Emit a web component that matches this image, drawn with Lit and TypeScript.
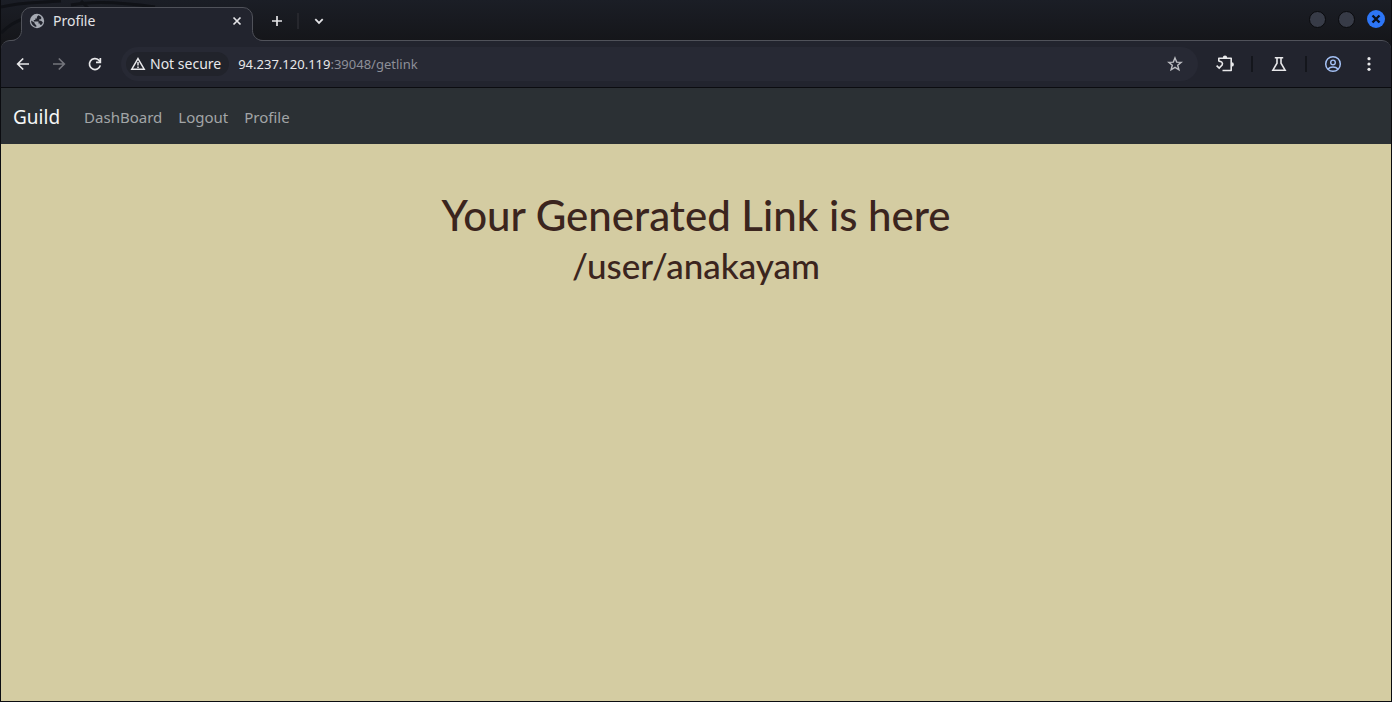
import { LitElement, html, css, svg } from "lit";
import { customElement, property } from "lit/decorators.js";

const icons = {
  back: svg`<path d="M14 8H3M8.200 2.500 2.700 8l5.500 5.500" fill="none" stroke="currentColor" stroke-width="1.700"/>`,
  forward: svg`<path d="M2 8h11M7.800 2.500 13.300 8l-5.500 5.500" fill="none" stroke="currentColor" stroke-width="1.700"/>`,
  reload: svg`<path d="M13.300 9.400A5.500 5.500 0 1 1 11.800 4.100L13.400 6" fill="none" stroke="currentColor" stroke-width="1.700"/><path d="M14.200 2v5.200H9V5.500h3.500V2z" fill="currentColor"/>`,
  close: svg`<path d="M4.500 4.500l7 7m0-7-7 7" stroke="currentColor" stroke-width="1.700"/>`,
  plus: svg`<path d="M8 3v10M3 8h10" stroke="currentColor" stroke-width="1.700"/>`,
  chevron: svg`<path d="M4.300 6.200 8 9.900l3.700-3.700" fill="none" stroke="currentColor" stroke-width="1.800"/>`,
  globe: svg`<circle cx="8" cy="8" r="7.200" fill="currentColor"/><path d="M9.300 2.300 7.900 4v1.500H6.300v1.600H4.800v1.400h4.700v2h1.400v1.300h1.600a6 6 0 0 0 1.300-2.600L12 7.700h-1.700V6.200h1.900V4A6 6 0 0 0 9.300 2.300zM2.100 7.500A6 6 0 0 0 7.300 13.900v-1.700L5.700 10.700V9.800z" fill="#22242e"/>`,
  warning: svg`<path d="M8 2.600 14.200 13.200H1.800z" fill="none" stroke="currentColor" stroke-width="1.500"/><path d="M8 6v3.600M8 10.500v1.500" stroke="currentColor" stroke-width="1.500"/>`,
  star: svg`<path d="M8 1.900 9.700 6.100 14.200 6.400 10.700 9.300 11.900 13.800 8 11.300 4.100 13.800 5.300 9.300 1.800 6.400 6.300 6.100z" fill="none" stroke="currentColor" stroke-width="1.400"/>`,
  puzzle: svg`<g transform="scale(.8889)"><path d="M2.800 6.500V3.300h12.400v12.200H6.500" fill="none" stroke="currentColor" stroke-width="1.600" stroke-linejoin="round"/><path d="M2.800 6.200c2.600 0 4.500 1.600 3.300 3.800L3.200 13.100.600 10.600" fill="none" stroke="currentColor" stroke-width="1.600"/><path d="M6.800 2.900a2.200 2.300 0 0 1 4.400 0zM15.700 7.200a2.200 2.200 0 0 1 0 4.400z" fill="currentColor"/></g>`,
  flask: svg`<path d="M3.800 1.700h8.400M6 2v5.200L1.900 14.200h12.200L10 7.200V2" fill="none" stroke="currentColor" stroke-width="1.600"/>`,
  person: svg`<circle cx="8" cy="8" r="7.300" fill="none" stroke="currentColor" stroke-width="1.500"/><circle cx="8" cy="6.400" r="2.300" fill="none" stroke="currentColor" stroke-width="1.400"/><path d="M3 13c2.500-2.700 7.500-2.700 10 0" fill="none" stroke="currentColor" stroke-width="1.500"/>`,
  dots: svg`<circle cx="8" cy="2.700" r="1.600" fill="currentColor"/><circle cx="8" cy="8" r="1.600" fill="currentColor"/><circle cx="8" cy="13.300" r="1.600" fill="currentColor"/>`,
  closeBold: svg`<path d="M4.500 4.500l7 7m0-7-7 7" stroke="currentColor" stroke-width="2.400"/>`,
};

@customElement("ui-icon")
class UiIcon extends LitElement {
  @property() name: keyof typeof icons = "close";
  static styles = css`
    :host { display: inline-flex; width: 16px; height: 16px; flex: none; }
    svg { width: 100%; height: 100%; overflow: visible; }
  `;
  render() {
    return html`<svg viewBox="0 0 16 16" aria-hidden="true">${icons[this.name]}</svg>`;
  }
}

@customElement("browser-tabs")
class BrowserTabs extends LitElement {
  static styles = css`
    :host {
      position: relative; display: flex; align-items: flex-end; height: 40px;
      background: linear-gradient(#1b1e26, #15161a);
      color: #e3e3e6;
    }
    button { all: unset; box-sizing: border-box; display: grid; place-items: center; }
    .texture { position: absolute; left: 0; top: 0; width: 180px; height: 40px; }
    .tab {
      position: relative; flex: none; width: 252px; height: 34px;
      margin: 0 0 -1px 10px; padding: 0 18px 6px 18px; box-sizing: border-box;
      display: flex; align-items: center; gap: 8px;
    }
    .shape { position: absolute; inset: 0; width: 252px; height: 34px; }
    .favicon { position: relative; color: #a6aab3; }
    .title { position: relative; flex: 1; font-size: 14px; line-height: 20px; }
    .shut { position: relative; width: 16px; height: 16px; }
    .actions { flex: 1; height: 40px; padding-top: 2px; box-sizing: border-box; display: flex; align-items: center; }
    .add { width: 28px; height: 28px; }
    .rule { width: 2px; height: 16px; margin: 0 6px; background: #26272d; }
    .window { display: flex; align-items: center; gap: 12px; height: 38px; align-self: flex-start; padding-right: 6px; }
    .dot { width: 17px; height: 17px; border-radius: 50%; background: #373b47; border: 1px solid #090a0d; }
    .quit { width: 18px; height: 18px; border-radius: 50%; background: #2d76f7; color: #08101f; }
  `;
  render() {
    return html`
      <svg class="texture" viewBox="0 0 180 40" aria-hidden="true">
        <path d="M0 33C8 25 14 22 24 18M0 7C20 2 34 3 60 1M80 1l8 8M70 5c20-4 50-3 84 2" fill="none" stroke="#101217" stroke-width="3"/>
      </svg>
      <div class="tab">
        <svg class="shape" viewBox="0 0 252 34" aria-hidden="true">
          <path fill="#22242e" d="M0 34C6 34 10.500 29 10.500 23.500V10A9.500 9.500 0 0 1 20 .5H232A9.500 9.500 0 0 1 241.500 10V23.500C241.500 29 246 34 252 34Z"/>
          <path fill="none" stroke="#50525a" d="M0 33.500C6 33.500 10.500 29 10.500 23.500V10A9.500 9.500 0 0 1 20 .5H232A9.500 9.500 0 0 1 241.500 10V23.500C241.500 29 246 33.500 252 33.500"/>
        </svg>
        <ui-icon class="favicon" name="globe"></ui-icon>
        <span class="title">Profile</span>
        <button class="shut" aria-label="Close tab"><ui-icon name="close"></ui-icon></button>
      </div>
      <div class="actions">
        <button class="add" aria-label="New tab"><ui-icon name="plus"></ui-icon></button>
        <span class="rule"></span>
        <button class="add" aria-label="Search tabs"><ui-icon name="chevron"></ui-icon></button>
      </div>
      <div class="window">
        <button class="dot" aria-label="Minimize"></button>
        <button class="dot" aria-label="Maximize"></button>
        <button class="quit" aria-label="Close window"><ui-icon name="closeBold"></ui-icon></button>
      </div>
    `;
  }
}

@customElement("browser-toolbar")
class BrowserToolbar extends LitElement {
  static styles = css`
    :host { display: block; background: #15161a; }
    button { all: unset; box-sizing: border-box; display: grid; place-items: center; width: 36px; height: 34px; }
    .bar {
      display: flex; align-items: center; padding: 6px 12px 6px 4px;
      background: #22242e; color: #e8e8ea;
      border-top: 1px solid #50525a; border-bottom: 1px solid #0b0c10;
      border-radius: 9px 9px 0 0;
    }
    .dim { color: #74757c; }
    .address {
      flex: 1; display: flex; align-items: center; box-sizing: border-box; height: 34px;
      margin: 0 1px 0 8px; padding: 0 6px 0 5px; border-radius: 17px; background: #272934;
      font-size: 14px; line-height: 20px;
    }
    .chip {
      width: auto; height: 24px; display: flex; align-items: center; gap: 4px;
      padding: 0 8px 0 4px; margin-right: 9px; border-radius: 12px; background: #21232b;
    }
    .url { flex: 1; font-size: 13px; }
    .path { color: #8d8f98; }
    .star { width: 34px; color: #bcbdc1; }
    .rule { width: 2px; height: 16px; background: #14161c; }
    .action { width: 52px; }
    .person { color: #a4c1f5; }
    .puzzle ui-icon { width: 18px; height: 18px; }
    .menu { width: 20px; }
  `;
  render() {
    return html`
      <div class="bar">
        <button aria-label="Back"><ui-icon name="back"></ui-icon></button>
        <button class="dim" aria-label="Forward"><ui-icon name="forward"></ui-icon></button>
        <button aria-label="Reload"><ui-icon name="reload"></ui-icon></button>
        <div class="address">
          <button class="chip"><ui-icon name="warning"></ui-icon>Not secure</button>
          <span class="url">94.237.120.119<span class="path">:39048/getlink</span></span>
          <button class="star" aria-label="Bookmark this page"><ui-icon name="star"></ui-icon></button>
        </div>
        <button class="action puzzle" aria-label="Extensions"><ui-icon name="puzzle"></ui-icon></button>
        <span class="rule"></span>
        <button class="action" aria-label="Experiments"><ui-icon name="flask"></ui-icon></button>
        <span class="rule"></span>
        <button class="action person" aria-label="Account"><ui-icon name="person"></ui-icon></button>
        <button class="menu" aria-label="Menu"><ui-icon name="dots"></ui-icon></button>
      </div>
    `;
  }
}

@customElement("guild-page")
class GuildPage extends LitElement {
  static styles = css`
    :host { display: flex; flex-direction: column; background: #d4cca2; }
    nav { display: flex; align-items: center; box-sizing: border-box; height: 56px; padding: 2px 12px 0; background: #2b3034; }
    a { color: #a2a5a7; text-decoration: none; font-size: 15px; line-height: 24px; padding: 0 8px; }
    .brand { color: #f5f6f6; font-size: 19px; line-height: 30px; padding: 0; margin-right: 16px; }
    main { padding: 48px 12px; text-align: center; color: #3b251e; font-family: Lato, "Noto Sans", sans-serif; }
    h1, h2 { margin: 0 0 8px; font-weight: 500; }
    h1 { font-size: 42px; line-height: 46px; }
    h2 { font-size: 35px; line-height: 38px; }
  `;
  render() {
    return html`
      <nav>
        <a class="brand" href="#">Guild</a>
        <a href="#">DashBoard</a>
        <a href="#">Logout</a>
        <a href="#">Profile</a>
      </nav>
      <main>
        <h1>Your Generated Link is here</h1>
        <h2>/user/anakayam</h2>
      </main>
    `;
  }
}

@customElement("app-root")
class AppRoot extends LitElement {
  static styles = css`
    :host {
      display: flex; flex-direction: column; box-sizing: border-box; min-height: 100vh;
      border: 1px solid #0b0c10; border-top: 0; background: #15161a;
      font-family: "Noto Sans", sans-serif;
    }
    guild-page { flex: 1; }
  `;
  render() {
    return html`
      <browser-tabs></browser-tabs>
      <browser-toolbar></browser-toolbar>
      <guild-page></guild-page>
    `;
  }
}
